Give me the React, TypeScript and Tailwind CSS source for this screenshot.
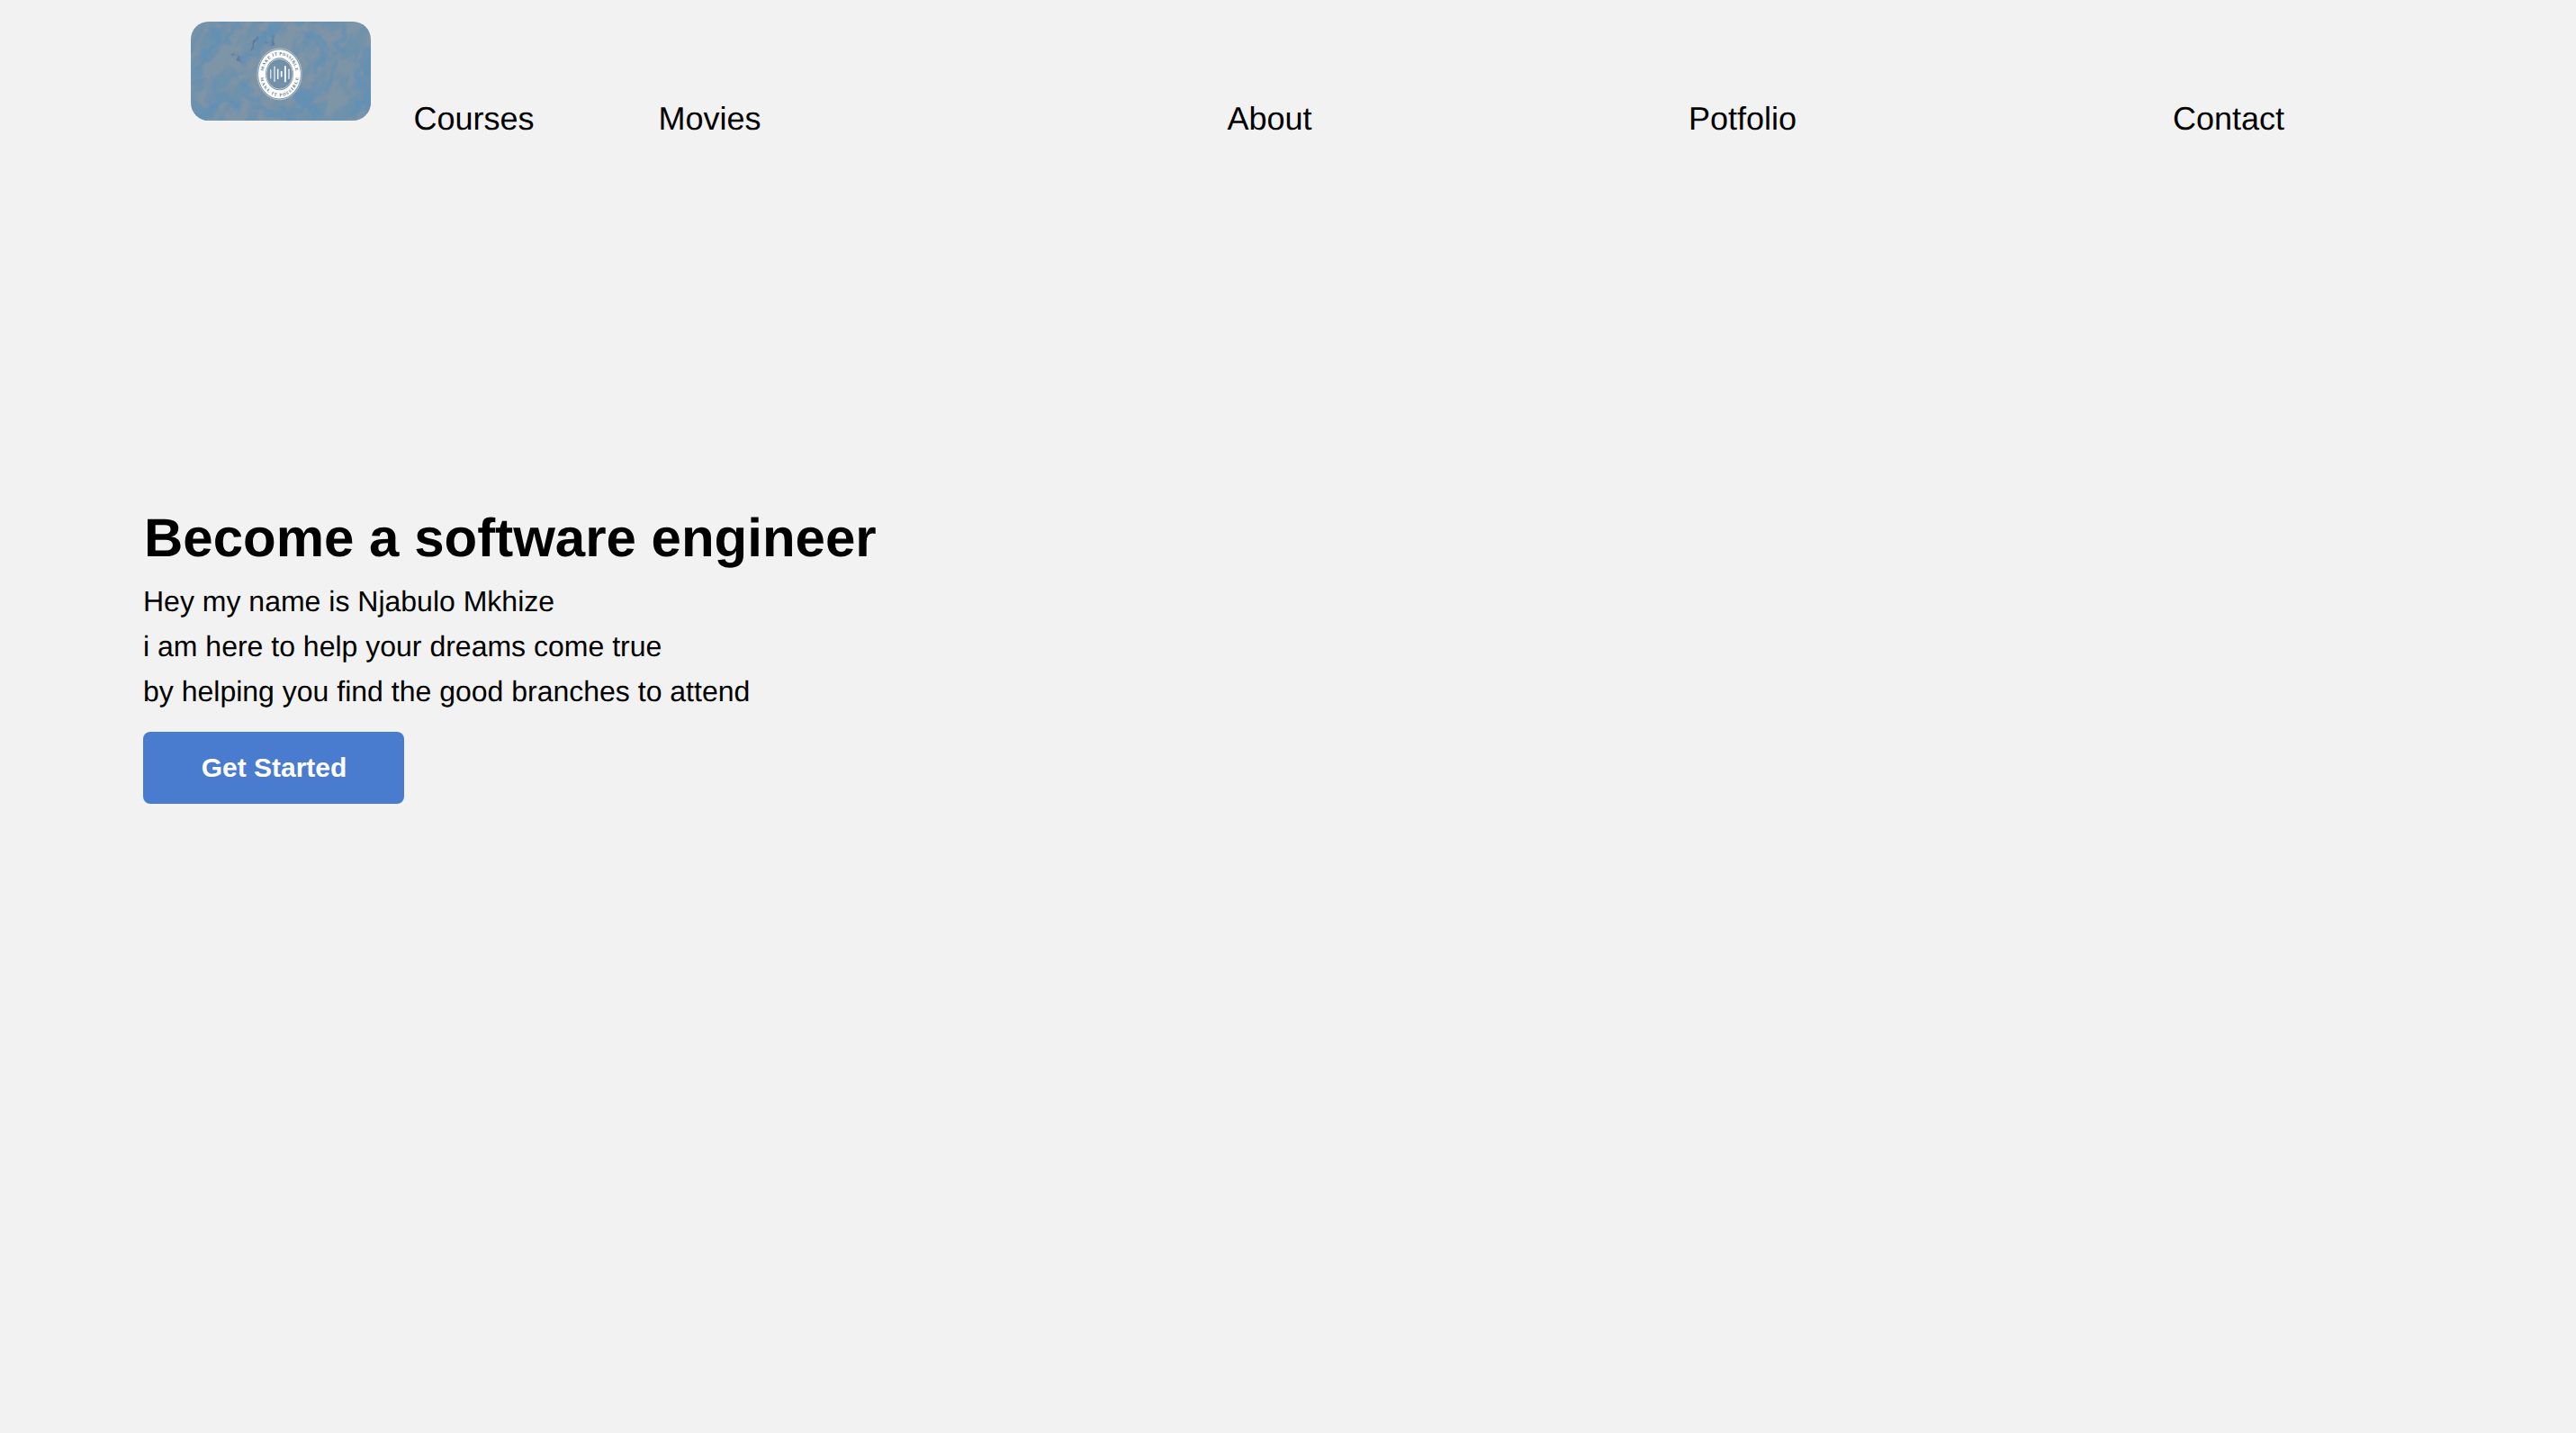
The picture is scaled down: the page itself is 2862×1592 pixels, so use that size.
import React from "react";

function Bar({ x, h, w = 1.1 }: { x: number; h: number; w?: number }) {
  return <rect x={x - w / 2} y={-h / 2} width={w} height={h} rx={w / 2} fill="#f4f8fa" />;
}

function Logo() {
  return (
    <svg viewBox="0 0 200 110" className="block h-[110px] w-[200px] shrink-0 rounded-[20px]" aria-label="Make it possible">
      <defs>
        <filter id="veins" x="0" y="0" width="100%" height="100%" colorInterpolationFilters="sRGB">
          <feTurbulence type="fractalNoise" baseFrequency="0.03 0.06" numOctaves="5" seed="23" />
          <feColorMatrix values="0 0 0 0 0.37  0 0 0 0 0.56  0 0 0 0 0.70  0 5 0 0 -2.2" />
        </filter>
        <filter id="rough" x="-20%" y="-20%" width="140%" height="140%" colorInterpolationFilters="sRGB">
          <feTurbulence type="fractalNoise" baseFrequency="0.07" numOctaves="4" seed="5" result="noise" />
          <feGaussianBlur in="SourceGraphic" stdDeviation="1.6" result="blurred" />
          <feDisplacementMap in="blurred" in2="noise" scale="22" xChannelSelector="R" yChannelSelector="G" />
        </filter>
        <path id="arcTop" d="M-18.2 0A18.2 18.2 0 0 1 18.2 0" />
        <path id="arcBottom" d="M-21.4 0A21.4 21.4 0 0 0 21.4 0" />
      </defs>
      <rect width="200" height="110" fill="#7e94a7" />
      <g transform="rotate(-58 100 55)">
        <rect x="-40" y="-70" width="280" height="250" filter="url(#veins)" opacity="0.5" />
      </g>
      <g filter="url(#rough)" fill="none" stroke="#5d8fb7" strokeLinecap="round">
        <g opacity="0.6">
          <path d="M-5 -5H205M-4 20V60" strokeWidth="8" />
          <path d="M28 8L22 30L12 48L4 66M52 4L36 24M92 6L76 32L56 44" strokeWidth="8" />
          <path d="M2 88L16 104L36 84L52 94M58 72L76 98L110 106L128 92L150 70L160 50" strokeWidth="7" />
          <path d="M128 16L150 30L140 52M170 10L160 40M196 34L184 60L194 86L176 108" strokeWidth="8" />
          <path d="M198 30V110M4 96V112M120 80L140 100" strokeWidth="9" />
        </g>
        <path d="M120 12L134 20L130 44M186 30L178 56L194 70M24 60L30 82L20 96M46 54L66 60" strokeWidth="2.5" opacity="0.6" />
        <path d="M66 29L71 23M74 22L76 21M88 22L91 15M51 42L56 37" stroke="#355f98" strokeWidth="3" opacity="0.75" />
      </g>
      <g transform="translate(98.5 58.3) scale(1 1.16)">
        <circle r="24.6" fill="none" stroke="#b9c8d3" strokeWidth="0.8" />
        <circle r="23.4" fill="#ffffff" />
        <circle r="15.5" fill="#708ca2" />
        <circle r="14.5" fill="none" stroke="#dde6ec" strokeWidth="0.7" />
        <circle r="13.5" fill="#7290a7" />
        <Bar x={-9.7} h={9} />
        <Bar x={-5.5} h={15} w={1.2} />
        <Bar x={-1.8} h={10} w={1.5} />
        <Bar x={2.2} h={6} w={1.8} />
        <Bar x={6.4} h={16} w={1.9} />
        <Bar x={10.5} h={10} w={1.3} />
        <g className="font-['Liberation_Serif',serif] text-[4.4px] font-bold" fill="#4f6f88">
          <text textAnchor="middle">
            <textPath href="#arcTop" startOffset="50%" textLength="51">MAKE IT POSSIBLE</textPath>
          </text>
          <text textAnchor="middle">
            <textPath href="#arcBottom" startOffset="50%" textLength="60">MAKE IT POSSIBLE</textPath>
          </text>
        </g>
      </g>
    </svg>
  );
}

export default function App() {
  return (
    <div className="min-h-[1592px] bg-[#f2f2f2] font-['Liberation_Sans',Arial,sans-serif] text-black [text-rendering:geometricPrecision]">
      <header className="flex h-[200px] items-start pl-[212px] pt-6">
        <Logo />
        <nav className="ml-[47.5px] mt-[87px] grid grid-cols-[272px_632px_512.5px_538px_auto] text-[36px] leading-[42px]">
          <a>Courses</a>
          <a>Movies</a>
          <a>About</a>
          <a>Potfolio</a>
          <a>Contact</a>
        </nav>
      </header>
      <main className="flex flex-col items-start pl-[159px] pt-[363px]">
        <h1 className="pl-px text-[60px] font-bold leading-[70px]">Become a software engineer</h1>
        <p className="mt-2.5 text-[32px] leading-[50px]">
          Hey my name is Njabulo Mkhize
          <br />
          i am here to help your dreams come true
          <br />
          by helping you find the good branches to attend
        </p>
        <button className="mt-5 h-20 w-[290px] rounded-lg bg-[#497bce] pl-px text-[30px] font-bold leading-[34px] text-white">
          Get Started
        </button>
      </main>
    </div>
  );
}
